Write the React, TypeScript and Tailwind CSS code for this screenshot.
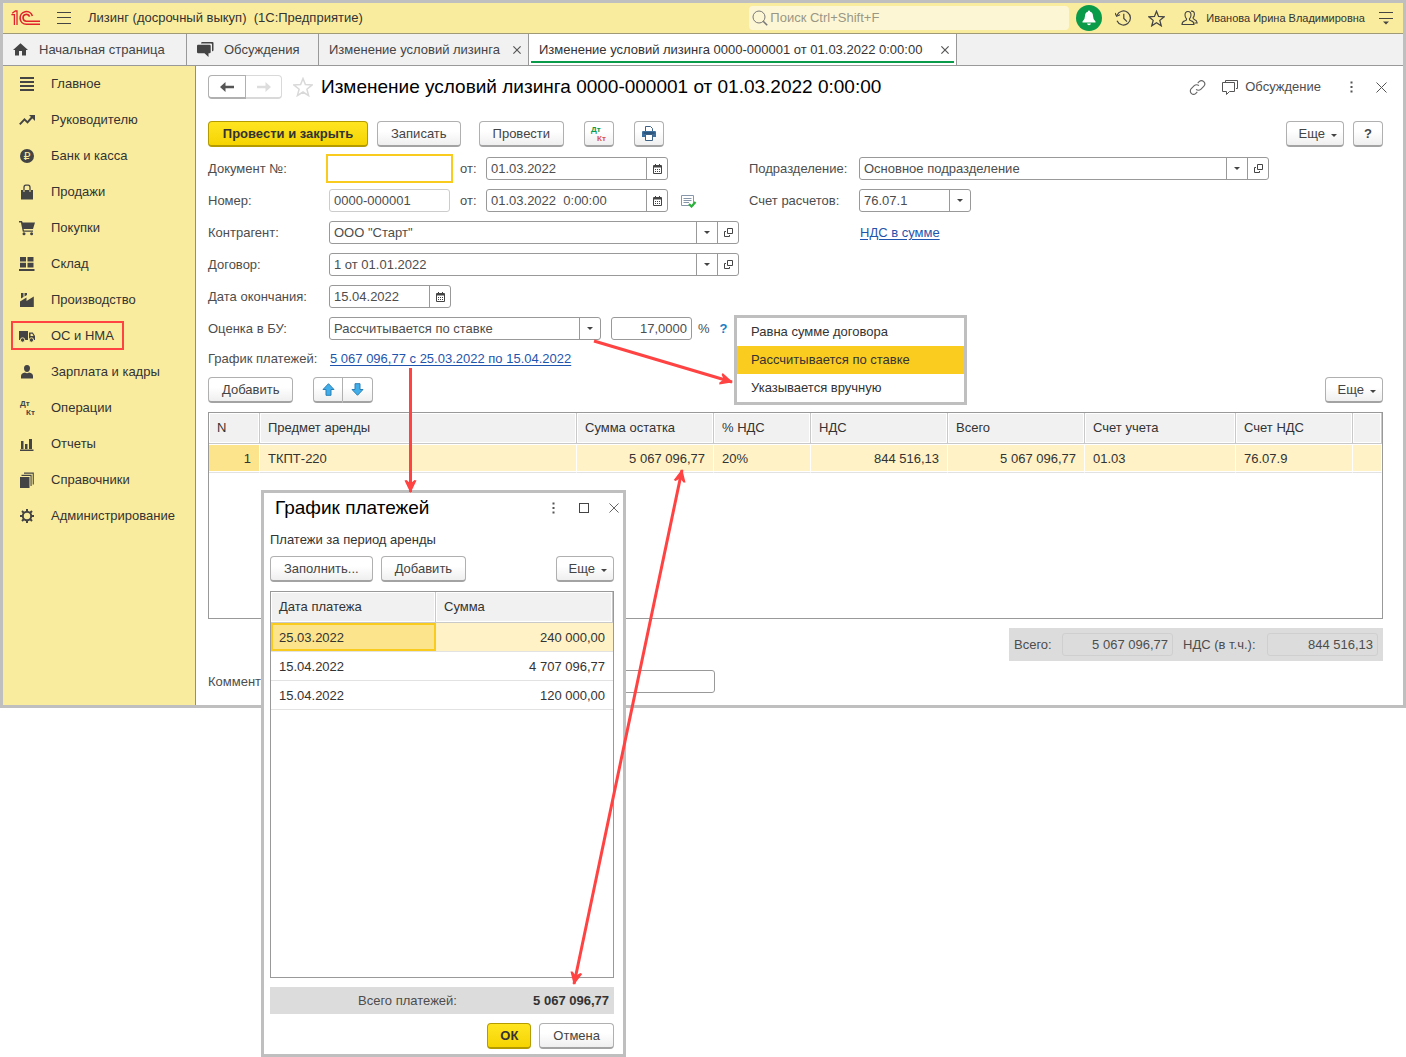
import React from 'react';

type IconProps = { className?: string };

const btnBase =
  'h-[26px] shrink-0 rounded-sm border border-[#b0b0b0] border-b-2 border-b-[#a3a3a3] bg-linear-to-b from-white from-40% to-[#efefef] leading-5 text-[#444] whitespace-nowrap';
const btn = `${btnBase} px-[13px]`;
const iconBtn = `${btnBase} flex w-[30px] items-center justify-center`;
const primaryBtn =
  'h-[26px] shrink-0 rounded-sm border border-[#b39b00] border-b-2 bg-linear-to-b from-[#ffe51f] to-[#f5d400] font-bold leading-5 text-[#333] whitespace-nowrap';
const box = 'flex h-[23px] rounded-[3px] border border-[#999] bg-white';
const th = 'h-[31px] border-r border-b border-[#c9c9c9] bg-[#f1f1f1] px-2 text-left font-normal shadow-[inset_0_0_0_1px_#fff]';
const td = 'h-[29px] border-b border-[#e2e2e2] px-2 pt-0.5';
const selectedTd = 'border-r border-r-white shadow-[inset_0_1px_0_#fff,inset_0_-1px_0_#fff]';

function Logo() {
  return (
    <svg width="30" height="16" viewBox="0 0 30 16" fill="none" stroke="#e0222b" aria-label="1С">
      <path d="M0.4 4.6H3.4V15" strokeWidth="1.3" />
      <path d="M1.2 3.2 4.4 1H6V15" strokeWidth="1.3" />
      <path d="M21.4 6A6.3 6.3 0 1 0 15.4 14.2H29" strokeWidth="1.6" />
      <path d="M18.6 6.6A3.4 3.4 0 1 0 15.4 11.2H29" strokeWidth="1.6" />
    </svg>
  );
}

function HomeIcon() {
  return (
    <svg width="15" height="13" viewBox="0 0 15 13" fill="#444">
      <path d="M7.5 0.3 15 7H13V12.5H9V8H6V12.5H2V7H0L7.5 0.3Z" />
    </svg>
  );
}

function ChatIcon() {
  return (
    <svg width="17" height="15" viewBox="0 0 17 15" fill="#444">
      <path d="M5 0H15.5Q16.5 0 16.5 1V8.5L15 9.5V2.5Q15 1.5 14 1.5H4Q4 0 5 0Z" />
      <path d="M1 2.8H12.5Q13.7 2.8 13.7 4V10Q13.7 11.2 12.5 11.2H11.5V15L7.5 11.2H1.2Q0 11.2 0 10V4Q0 2.8 1 2.8Z" />
    </svg>
  );
}

function DtKtIcon({ dt, kt }: { dt: string; kt: string }) {
  return (
    <svg width="18" height="20" viewBox="0 0 18 20" className="shrink-0 text-[8px] font-bold">
      <text x="1" y="8" fill={dt}>Дт</text>
      <text x="7" y="17" fill={kt}>Кт</text>
    </svg>
  );
}

const sideIcons: Record<string, React.ReactNode> = {
  main: <path d="M1 1H15V3H1ZM1 5H15V7H1ZM1 9H15V11H1ZM1 13H15V15H1Z" />,
  trend: (
    <>
      <path d="M0.8 12.4 5.5 7.4 8.5 10.4 13.2 5" fill="none" stroke="#444" strokeWidth="2" />
      <path d="M10 3H16V9Z" />
    </>
  ),
  bank: (
    <>
      <circle cx="8" cy="8" r="7" />
      <text x="4.6" y="12" fill="#faec9e" fontSize="11" fontFamily="DejaVu Sans, sans-serif">₽</text>
    </>
  ),
  bag: (
    <>
      <path d="M2 6H14V15.5H2Z" />
      <path d="M5 8V3.5Q5 1.2 6.8 1.2H9.2Q11 1.2 11 3.5V8" fill="none" stroke="#444" strokeWidth="1.3" />
      <path d="M5 6V8M11 6V8" stroke="#faec9e" />
    </>
  ),
  cart: (
    <>
      <path d="M0 1H3L3.6 2.6H16L14 9H4.6L5 10.4H14V11.8H3.8L1.9 2.4H0Z" />
      <circle cx="5" cy="13.8" r="1.5" />
      <circle cx="12.6" cy="13.8" r="1.5" />
    </>
  ),
  stock: <path d="M1 1H7V5.5H1ZM8.5 1H14.5V5.5H8.5ZM1 6.7H7V11.4H1ZM8.5 6.7H14.5V11.4H8.5ZM0 13H15.5V15H0Z" />,
  factory: <path d="M2 1H4.5V5L2 6.5ZM5.5 1H8V3L5.5 4.6ZM1 9.5 7.5 5.5V9L14.8 4.5V15H1Z" />,
  truck: (
    <>
      <path d="M0 3H9V12H0ZM10 4.5H13.8L16 8V12H10Z" />
      <path d="M11.5 5.8H13.3L14.6 8H11.5Z" fill="#faec9e" />
      <circle cx="3.6" cy="12" r="2.2" stroke="#faec9e" strokeWidth="0.9" />
      <circle cx="12.4" cy="12" r="2.2" stroke="#faec9e" strokeWidth="0.9" />
    </>
  ),
  person: <path d="M8 1C10.2 1 11 2.4 11 4.2C11 6.2 9.8 8 8 8S5 6.2 5 4.2C5 2.4 5.8 1 8 1ZM6 8.6Q8 10 10 8.6Q14 9.5 14 12V14.5H2V12Q2 9.5 6 8.6Z" />,
  chart: <path d="M2 5H4.5V13H2ZM6 8H8.5V13H6ZM10 3H13V13H10ZM1 13.5H14.5V15H1Z" />,
  books: <path d="M1 5H10.5V16H1ZM2.5 2.8H12.6V14H11.5V3.9H2.5ZM5 0.6H14.8V12.5H13.7V1.7H5Z" />,
  gear: (
    <>
      <circle cx="8" cy="8" r="4.2" fill="none" stroke="#444" strokeWidth="2" />
      <path d="M8 1V4M8 12V15M1 8H4M12 8H15M3 3 5.2 5.2M10.8 10.8 13 13M3 13 5.2 10.8M10.8 5.2 13 3" stroke="#444" strokeWidth="2" />
    </>
  ),
};

const sections = [
  { icon: 'main', label: 'Главное' },
  { icon: 'trend', label: 'Руководителю' },
  { icon: 'bank', label: 'Банк и касса' },
  { icon: 'bag', label: 'Продажи' },
  { icon: 'cart', label: 'Покупки' },
  { icon: 'stock', label: 'Склад' },
  { icon: 'factory', label: 'Производство' },
  { icon: 'truck', label: 'ОС и НМА', marked: true },
  { icon: 'person', label: 'Зарплата и кадры' },
  { icon: 'dtkt', label: 'Операции' },
  { icon: 'chart', label: 'Отчеты' },
  { icon: 'books', label: 'Справочники' },
  { icon: 'gear', label: 'Администрирование' },
];

function StarIcon({ size, color }: { size: number; color: string }) {
  return (
    <svg width={size} height={size} viewBox="0 0 20 20" fill="none" stroke={color} strokeWidth="1.5">
      <path d="M10 1.5 12.4 7.6 19 8 13.9 12.2 15.6 18.6 10 15 4.4 18.6 6.1 12.2 1 8 7.6 7.6Z" />
    </svg>
  );
}

function Caret({ className = '' }: IconProps) {
  return (
    <svg width="6" height="3" viewBox="0 0 6 3" fill="#444" className={className}>
      <path d="M0 0H6L3 3Z" />
    </svg>
  );
}

function CloseIcon({ size = 11, width = 1 }: { size?: number; width?: number }) {
  return (
    <svg width={size} height={size} viewBox="0 0 11 11" stroke="#555" strokeWidth={width}>
      <path d="M0.5 0.5 10.5 10.5M10.5 0.5 0.5 10.5" />
    </svg>
  );
}

function DotsIcon() {
  return (
    <svg width="3" height="12" viewBox="0 0 3 12" fill="#555">
      <path d="M0.5 0.5H2.5V2.5H0.5ZM0.5 5H2.5V7H0.5ZM0.5 9.5H2.5V11.5H0.5Z" />
    </svg>
  );
}

function CalendarIcon() {
  return (
    <svg width="9" height="10" viewBox="0 0 9 10">
      <path d="M0.5 1.5H8.5V9.5H0.5Z" fill="none" stroke="#444" />
      <path d="M1 1H8V3.5H1ZM2 0H3V1H2ZM6 0H7V1H6Z" fill="#444" />
      <path d="M2 5.5H7M2 7.5H7" stroke="#444" strokeDasharray="1 1" />
    </svg>
  );
}

function OpenIcon() {
  return (
    <svg width="9" height="9" viewBox="0 0 9 9" fill="none" stroke="#444">
      <path d="M3.5 0.5H8.5V5.5H3.5ZM2 3.5H0.5V8.5H5.5V7" />
    </svg>
  );
}

function DateField({ id, value, className }: { id: string; value: string; className: string }) {
  return (
    <div className={`${box} ${className}`}>
      <input id={id} defaultValue={value} className="min-w-0 flex-1 bg-transparent px-1 outline-none" />
      <button aria-label="Выбрать дату" className="flex w-[21px] items-center justify-center border-l border-[#999]">
        <CalendarIcon />
      </button>
    </div>
  );
}

function SelectField({ id, options, open, className }: { id: string; options: string[]; open?: boolean; className: string }) {
  return (
    <div className={`${box} ${className}`}>
      <div className="relative flex min-w-0 flex-1">
        <select id={id} defaultValue={options[0]} className="w-full appearance-none bg-transparent pr-6 pl-1 outline-none">
          {options.map((o) => (
            <option key={o}>{o}</option>
          ))}
        </select>
        <span className="pointer-events-none absolute inset-y-0 right-0 flex w-[21px] items-center justify-center border-l border-[#999]">
          <Caret />
        </span>
      </div>
      {open && (
        <button aria-label="Открыть" className="flex w-[21px] items-center justify-center border-l border-[#999]">
          <OpenIcon />
        </button>
      )}
    </div>
  );
}

function Row({ id, label, children, className = 'w-[121px]' }: { id: string; label: string; children: React.ReactNode; className?: string }) {
  return (
    <div className="flex h-[23px] items-center">
      <label htmlFor={id} className={`shrink-0 whitespace-nowrap ${className}`}>
        {label}
      </label>
      {children}
    </div>
  );
}

function MoreButton() {
  return (
    <button className={`${btnBase} flex items-center gap-1.5 pr-1.5 pl-3`}>
      Еще
      <Caret className="mt-1" />
    </button>
  );
}

function TopBar() {
  return (
    <header className="flex h-[31px] items-center border-b border-[#a09a76] bg-[#faec9e] pr-[10px] pl-2">
      <Logo />
      <button aria-label="Меню" className="ml-4">
        <svg width="14" height="12" viewBox="0 0 14 12" stroke="#444">
          <path d="M0 0.5H14M0 5.5H14M0 11.5H14" />
        </svg>
      </button>
      <div className="ml-[17px] flex-1 whitespace-pre text-[#333]">Лизинг (досрочный выкуп)  (1С:Предприятие)</div>
      <label className="flex h-6 w-80 items-center rounded-sm bg-[#fdf6d5] pl-[3px]">
        <svg width="16" height="16" viewBox="0 0 16 16" fill="none" stroke="#777">
          <circle cx="7" cy="7" r="6" />
          <path d="M11.2 11.2 15.2 15.2" strokeWidth="1.6" />
        </svg>
        <input placeholder="Поиск Ctrl+Shift+F" className="min-w-0 flex-1 bg-transparent pl-0.5 outline-none placeholder:text-[#9a9684]" />
      </label>
      <button aria-label="Уведомления" className="ml-[7px] flex size-[26px] items-center justify-center rounded-full bg-[#0a9b4a]">
        <svg width="14" height="16" viewBox="0 0 14 16" fill="#fff">
          <path d="M7 0.5Q8 0.5 8.2 1.8Q11 2.6 11 6Q11 9.5 13.5 11.5V12.5H0.5V11.5Q3 9.5 3 6Q3 2.6 5.8 1.8Q6 0.5 7 0.5ZM5 13.5H9Q8.6 15.2 7 15.2T5 13.5Z" />
        </svg>
      </button>
      <button aria-label="История" className="ml-[13px]">
        <svg width="17" height="16" viewBox="0 0 17 16" fill="none" stroke="#444" strokeWidth="1.2">
          <path d="M2 5.2A7 7 0 1 1 2 10.8M8.8 3.8V8.4L12 11.6" />
          <path d="M0 3 1.6 6.2 5 4.8" />
        </svg>
      </button>
      <button aria-label="Избранное" className="ml-4">
        <StarIcon size={17} color="#444" />
      </button>
      <button aria-label="Пользователи" className="ml-4">
        <svg width="17" height="16" viewBox="0 0 17 16" fill="none" stroke="#444" strokeWidth="1.1">
          <path d="M7 1.5C9.3 1.5 10 3.2 10 5S9 8.4 8.4 9Q8.2 10.3 10 10.8Q13 11.6 13 14.5H1Q1 11.6 4 10.8Q5.8 10.3 5.6 9C5 8.4 4 6.8 4 5S4.7 1.5 7 1.5Z" />
          <path d="M10 1.2C12.4 0.8 13.6 2.4 13.4 4.4Q13.2 6.6 12 7.8Q12 9 13.4 9.5Q16 10.4 16.2 13H13.5" />
        </svg>
      </button>
      <div className="ml-2 text-[11px] whitespace-nowrap text-[#333]">Иванова Ирина Владимировна</div>
      <button aria-label="Настройки" className="ml-[14px]">
        <svg width="14" height="13" viewBox="0 0 14 13" stroke="#444">
          <path d="M0 0.5H14M0 6.5H14" />
          <path d="M4 9.5H10L7 12.5Z" fill="#444" stroke="none" />
        </svg>
      </button>
    </header>
  );
}

function Tabs() {
  return (
    <nav className="flex h-8 border-b border-[#999] bg-[#f1f1f1] text-[#444]">
      <a href="#home" className="flex w-[184px] items-center gap-[11px] border-r border-[#999] pl-[10px] whitespace-nowrap">
        <HomeIcon />
        Начальная страница
      </a>
      <a href="#chat" className="flex w-[132px] items-center gap-[10px] border-r border-[#999] pl-[10px] whitespace-nowrap">
        <ChatIcon />
        Обсуждения
      </a>
      <div className="flex w-[210px] items-center justify-between border-r border-[#999] pr-[7px] pl-[10px]">
        <a href="#list" className="whitespace-nowrap">Изменение условий лизинга</a>
        <button aria-label="Закрыть"><CloseIcon size={8} width={1.6} /></button>
      </div>
      <div className="relative flex w-[428px] items-center justify-between border-r border-[#999] bg-white pr-[7px] pl-[10px] text-[#333]">
        <a href="#doc" className="whitespace-nowrap">Изменение условий лизинга 0000-000001 от 01.03.2022 0:00:00</a>
        <button aria-label="Закрыть"><CloseIcon size={8} width={1.6} /></button>
        <span className="absolute inset-x-[2px] bottom-[2px] h-[2px] bg-[#0a9b4a]" />
      </div>
    </nav>
  );
}

function Sidebar() {
  return (
    <aside className="w-[193px] shrink-0 border-r border-[#999063] bg-[#faec9e] text-[#333]">
      {sections.map((s) => (
        <a key={s.label} href="#section" className="relative flex h-9 items-center gap-4 pl-4 whitespace-nowrap">
          {s.icon === 'dtkt' ? (
            <span className="w-4"><DtKtIcon dt="#444" kt="#444" /></span>
          ) : (
            <svg width="16" height="16" viewBox="0 0 16 16" fill="#444">{sideIcons[s.icon]}</svg>
          )}
          {s.label}
          {s.marked && <span className="absolute top-[3px] left-2 h-[29px] w-[113px] border-2 border-[#ff4242]" />}
        </a>
      ))}
    </aside>
  );
}

function DocumentHead() {
  return (
    <>
      <div className="flex h-6 items-center">
        <button aria-label="Назад" className="flex h-6 w-[38px] items-center justify-center rounded-l-sm border border-b-2 border-[#b0b0b0]">
          <svg width="14" height="10" viewBox="0 0 14 10" fill="#555">
            <path d="M0 5 5.5 0V3.8H14V6.2H5.5V10Z" />
          </svg>
        </button>
        <button aria-label="Вперед" disabled className="flex h-6 w-9 items-center justify-center rounded-r-sm border border-b-2 border-l-0 border-[#d9d9d9]">
          <svg width="14" height="10" viewBox="0 0 14 10" fill="#ddd">
            <path d="M14 5 8.5 0V3.8H0V6.2H8.5V10Z" />
          </svg>
        </button>
        <button aria-label="В избранное" className="ml-[11px]"><StarIcon size={20} color="#d9d9d9" /></button>
        <h1 className="ml-2 flex-1 text-[19px] whitespace-nowrap text-black">Изменение условий лизинга 0000-000001 от 01.03.2022 0:00:00</h1>
        <button aria-label="Ссылка" className="mr-4">
          <svg width="17" height="17" viewBox="0 0 24 24" fill="none" stroke="#666" strokeWidth="1.6">
            <path d="M10 14.5a4.6 4.6 0 0 0 6.6 0l4.2-4.2a4.5 4.5 0 0 0-6.5-6.5l-2 2" />
            <path d="M14 9.5a4.6 4.6 0 0 0-6.6 0l-4.2 4.2a4.5 4.5 0 0 0 6.5 6.5l2-2" />
          </svg>
        </button>
        <button className="mr-[29px] flex items-center gap-[6px]">
          <svg width="17" height="15" viewBox="0 0 17 15" fill="none" stroke="#555">
            <path d="M3.5 2V0.5H15.5V8.5H14" />
            <path d="M0.5 2.5H12.5V11.5H7.5L4.5 14.5V11.5H0.5Z" />
          </svg>
          Обсуждение
        </button>
        <button aria-label="Еще" className="mr-[23px]"><DotsIcon /></button>
        <button aria-label="Закрыть" className="mr-[-4px]"><CloseIcon /></button>
      </div>

      <div className="mt-[22px] flex">
        <button className={`${primaryBtn} w-40`}>Провести и закрыть</button>
        <button className={`${btn} ml-[9px]`}>Записать</button>
        <button className={`${btn} ml-[18px]`}>Провести</button>
        <button aria-label="Проводки" className={`${iconBtn} ml-5`}><DtKtIcon dt="#0a9b4a" kt="#d9534f" /></button>
        <button aria-label="Печать" className={`${iconBtn} ml-5`}>
          <svg width="14" height="15" viewBox="0 0 14 15">
            <path d="M3.5 5V0.5H8.5L10.5 2.5V5" fill="#fff" stroke="#3d6185" />
            <path d="M1 5H13Q14 5 14 6V11H0V6Q0 5 1 5Z" fill="#3d6f9f" />
            <path d="M1.5 7H12.5" stroke="#1f3f5f" />
            <path d="M3.5 8.5H10.5V14.5H3.5Z" fill="#fff" stroke="#3d6185" />
          </svg>
        </button>
        <div className="ml-auto flex gap-[9px]">
          <MoreButton />
          <button className={`${iconBtn} font-bold`}>?</button>
        </div>
      </div>
    </>
  );
}

function DocumentForm() {
  return (
    <div className="mt-[10px] flex gap-[10px]">
      <div className="flex w-[531px] shrink-0 flex-col gap-[9px]">
        <Row id="doc" label="Документ №:">
          <input id="doc" className="h-[23px] w-[121px] bg-white px-1 outline-2 outline-offset-1 outline-[#f9cb1f]" />
          <label htmlFor="docDate" className="w-9 pl-[10px]">от:</label>
          <DateField id="docDate" value="01.03.2022" className="w-[182px]" />
        </Row>
        <Row id="num" label="Номер:">
          <input id="num" defaultValue="0000-000001" className="h-[23px] w-[121px] rounded-[3px] border border-[#ccc] px-1" />
          <label htmlFor="numDate" className="w-9 pl-[10px]">от:</label>
          <DateField id="numDate" value="01.03.2022  0:00:00" className="w-[182px]" />
          <svg width="16" height="13" viewBox="0 0 16 13" className="mt-0.5 ml-[13px]">
            <path d="M0.5 0.5H12.5V10.5H0.5Z" fill="#fff" stroke="#8796a8" />
            <path d="M2.5 3.5H10.5M2.5 5.5H10.5M2.5 7.5H8" stroke="#8796a8" />
            <path d="M8 9 10.5 11.5 14.5 7" fill="none" stroke="#2bb03b" strokeWidth="2.2" />
          </svg>
        </Row>
        <Row id="partner" label="Контрагент:">
          <SelectField id="partner" options={['ООО "Старт"']} open className="w-[410px]" />
        </Row>
        <Row id="contract" label="Договор:">
          <SelectField id="contract" options={['1 от 01.01.2022']} open className="w-[410px]" />
        </Row>
        <Row id="endDate" label="Дата окончания:">
          <DateField id="endDate" value="15.04.2022" className="w-[122px]" />
        </Row>
        <Row id="method" label="Оценка в БУ:">
          <SelectField
            id="method"
            options={['Рассчитывается по ставке', 'Равна сумме договора', 'Указывается вручную']}
            className="w-[272px]"
          />
          <input aria-label="Ставка" defaultValue="17,0000" className="ml-[10px] h-[23px] w-[81px] rounded-[3px] border border-[#999] px-1 text-right" />
          <span className="ml-[6px]">%</span>
          <a href="#help" className="ml-[10px] font-bold text-[#1a7cc2]">?</a>
        </Row>
        <div className="flex h-5 items-center">
          <span className="w-[122px] whitespace-nowrap">График платежей:</span>
          <a href="#schedule" className="text-[#1f55ad] underline underline-offset-2">5 067 096,77 с 25.03.2022 по 15.04.2022</a>
        </div>
      </div>

      <div className="flex max-w-[520px] flex-1 flex-col gap-[9px]">
        <Row id="dept" label="Подразделение:" className="w-[110px]">
          <SelectField id="dept" options={['Основное подразделение']} open className="flex-1" />
        </Row>
        <Row id="account" label="Счет расчетов:" className="w-[110px]">
          <SelectField id="account" options={['76.07.1']} className="w-[112px]" />
        </Row>
        <div className="flex h-[23px] items-center pl-[111px]">
          <a href="#vat" className="text-[#1f55ad] underline underline-offset-2">НДС в сумме</a>
        </div>
      </div>
    </div>
  );
}

function MoveArrow({ down }: { down?: boolean }) {
  return (
    <svg width="13" height="13" viewBox="0 0 13 13" fill="#41aeea" stroke="#2a7fb5" className={`shrink-0 ${down ? 'rotate-180' : ''}`}>
      <path d="M6.5 0.7 12 6.5H9V12.3H4V6.5H1Z" />
    </svg>
  );
}

function LeaseItems() {
  return (
    <>
      <div className="mt-2 flex">
        <button className={btn}>Добавить</button>
        <button aria-label="Вверх" className={`${iconBtn} ml-5 rounded-r-none`}><MoveArrow /></button>
        <button aria-label="Вниз" className={`${iconBtn} rounded-l-none border-l-0`}><MoveArrow down /></button>
        <div className="ml-auto"><MoreButton /></div>
      </div>

      <div className="mt-[9px] h-[207px] border border-[#999]">
        <table className="w-full table-fixed border-separate border-spacing-0 whitespace-nowrap text-[#333]">
          <colgroup>
            <col className="w-[51px]" />
            <col />
            <col className="w-[137px]" />
            <col className="w-[97px]" />
            <col className="w-[137px]" />
            <col className="w-[137px]" />
            <col className="w-[151px]" />
            <col className="w-[117px]" />
            <col className="w-[29px]" />
          </colgroup>
          <thead>
            <tr>
              {['N', 'Предмет аренды', 'Сумма остатка', '% НДС', 'НДС', 'Всего', 'Счет учета', 'Счет НДС', ''].map((h, i) => (
                <th key={i} className={th}>{h}</th>
              ))}
            </tr>
          </thead>
          <tbody>
            <tr className="bg-[#fef2c6]">
              <td className={`${td} ${selectedTd} bg-[#fbe48c] text-right`}>1</td>
              <td className={`${td} ${selectedTd}`}>ТКПТ-220</td>
              <td className={`${td} ${selectedTd} text-right`}>5 067 096,77</td>
              <td className={`${td} ${selectedTd}`}>20%</td>
              <td className={`${td} ${selectedTd} text-right`}>844 516,13</td>
              <td className={`${td} ${selectedTd} text-right`}>5 067 096,77</td>
              <td className={`${td} ${selectedTd}`}>01.03</td>
              <td className={`${td} ${selectedTd}`}>76.07.9</td>
              <td className={`${td} ${selectedTd}`} />
            </tr>
          </tbody>
        </table>
      </div>

      <div className="mt-[9px] ml-auto flex h-[33px] w-[374px] items-center bg-[#dcdcdc] px-[5px]">
        <label htmlFor="total" className="w-12">Всего:</label>
        <input id="total" readOnly value="5 067 096,77" className="h-[23px] w-[111px] rounded-[3px] border border-[#cfcfcf] px-1 text-right" />
        <label htmlFor="vatTotal" className="ml-[10px] w-[84px] whitespace-nowrap">НДС (в т.ч.):</label>
        <input id="vatTotal" readOnly value="844 516,13" className="h-[23px] w-[111px] rounded-[3px] border border-[#cfcfcf] px-1 text-right" />
      </div>

      <div className="mt-[9px]">
        <Row id="comment" label="Комментарий:">
          <input id="comment" className="h-[23px] w-[386px] rounded-[3px] border border-[#999] px-1" />
        </Row>
      </div>
    </>
  );
}

function MethodMenu() {
  return (
    <div role="listbox" className="absolute top-[315px] left-[734px] w-[233px] border-3 border-[#bfbfbf] bg-white text-[#333]">
      {['Равна сумме договора', 'Рассчитывается по ставке', 'Указывается вручную'].map((o, i) => (
        <button key={o} role="option" aria-selected={i === 1} className={`block h-7 w-full px-[14px] text-left ${i === 1 ? 'bg-[#fbcc20]' : ''}`}>
          {o}
        </button>
      ))}
    </div>
  );
}

const payments = [
  ['25.03.2022', '240 000,00'],
  ['15.04.2022', '4 707 096,77'],
  ['15.04.2022', '120 000,00'],
];

function ScheduleDialog() {
  return (
    <section role="dialog" aria-label="График платежей" className="absolute top-[490px] left-[261px] flex h-[567px] w-[365px] flex-col border-3 border-[#bfbfbf] bg-white pr-[9px] pb-[5px] pl-[6px]">
      <div className="flex h-[30px] items-center pl-[5px]">
        <h2 className="flex-1 text-[19px] text-black">График платежей</h2>
        <button aria-label="Еще" className="mr-6"><DotsIcon /></button>
        <button aria-label="Развернуть" className="mr-5 size-[10px] border border-[#444]" />
        <button aria-label="Закрыть" className="mr-[-5px]"><CloseIcon size={10} /></button>
      </div>
      <p className="mt-[7px] h-[18px] text-[#333]">Платежи за период аренды</p>
      <div className="mt-2 flex gap-2">
        <button className={btn}>Заполнить...</button>
        <button className={btn}>Добавить</button>
        <div className="ml-auto"><MoreButton /></div>
      </div>

      <div className="mt-[9px] flex-1 border border-[#999]">
        <table className="w-full table-fixed border-separate border-spacing-0 text-[#333]">
          <colgroup>
            <col className="w-[165px]" />
            <col />
          </colgroup>
          <thead>
            <tr>
              <th className={th}>Дата платежа</th>
              <th className={th}>Сумма</th>
            </tr>
          </thead>
          <tbody>
            {payments.map(([date, sum], i) => (
              <tr key={i} className={i === 0 ? 'bg-[#fef2c6]' : ''}>
                <td className={`${td} ${i === 0 ? 'bg-[#fbe48c] shadow-[inset_0_0_0_2px_#f9cb1f]' : ''}`}>{date}</td>
                <td className={`${td} text-right`}>{sum}</td>
              </tr>
            ))}
          </tbody>
        </table>
      </div>

      <div className="mt-[9px] flex h-[27px] items-center bg-[#dcdcdc] pr-[5px]">
        <span className="flex-1 pl-[88px]">Всего платежей:</span>
        <b className="text-[#333]">5 067 096,77</b>
      </div>
      <div className="mt-[9px] flex justify-end gap-2">
        <button className={`${primaryBtn} w-11`}>ОК</button>
        <button className={btn}>Отмена</button>
      </div>
    </section>
  );
}

function Arrows() {
  return (
    <svg width="760" height="1000" viewBox="0 0 760 1000" className="pointer-events-none absolute top-0 left-0" stroke="#ff4242" strokeWidth="3" fill="none">
      <defs>
        <marker id="tip" markerUnits="userSpaceOnUse" markerWidth="16" markerHeight="14" refX="13" refY="7" orient="auto-start-reverse">
          <path d="M14 7 1.5 1 1 3 4.5 7 1 11 1.5 13Z" fill="#ff4242" stroke="none" />
        </marker>
      </defs>
      <path d="M594 341 732 382" markerEnd="url(#tip)" />
      <path d="M410.5 368V492" markerEnd="url(#tip)" />
      <path d="M682 470 574 984" markerStart="url(#tip)" markerEnd="url(#tip)" />
    </svg>
  );
}

export default function App() {
  return (
    <div className="relative min-h-screen bg-white font-['Liberation_Sans',Arial,sans-serif] text-[13px] text-[#4d4d4d]">
      <div className="border-3 border-[#bfbfbf]">
        <TopBar />
        <Tabs />
        <div className="flex">
          <Sidebar />
          <main className="min-w-0 flex-1 pt-[9px] pr-5 pb-3 pl-3">
            <DocumentHead />
            <DocumentForm />
            <LeaseItems />
          </main>
        </div>
      </div>
      <MethodMenu />
      <ScheduleDialog />
      <Arrows />
    </div>
  );
}
